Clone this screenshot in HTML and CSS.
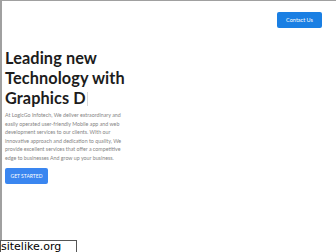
FILE: index.html
```html
<!DOCTYPE html>
<html>

<head lang="en">
    <meta charset="UTF-8">
    <title>LogicGo Infotech</title>
    <link rel="stylesheet" href="styles.css">
</head>

<body>
    <div class="frame">
        <div class="header">
            <a class="contact-btn" href="javascript:;">Contact Us</a>
        </div>
        <div class="hero">
            <h1 class="hero-title">Leading new<br>Technology with<br>Graphics D<span class="cursor"></span></h1>
            <p class="hero-text">At LogicGo Infotech, We deliver extraordinary and easily operated user-friendly Mobile app and web development services to our clients. With our innovative approach and dedication to quality, We provide excellent services that offer a competitive edge to businesses And grow up your business.</p>
            <a class="start-btn" href="javascript:;">GET STARTED</a>
        </div>
    </div>
    <div class="site-label">sitelike.org</div>
</body>

</html>
```

FILE: styles.css
```css
html,
body,
div,
p,
h1,
a {
    padding: 0px;
    margin: 0px;
}

body {
    width: 336px;
    height: 252px;
    overflow: hidden;
    background: #ffffff;
    font-family: "Lato", "Noto Sans", sans-serif;
    position: relative;
}

a {
    text-decoration: none;
}

.frame {
    height: 240px;
    border-top: 1px solid #a0a0a0;
    border-left: 2px solid #a0a0a0;
}

.header {
    display: flex;
    justify-content: flex-end;
    padding: 11px 14px 0px 0px;
}

.contact-btn {
    display: block;
    width: 45px;
    height: 16px;
    line-height: 16px;
    text-align: center;
    font-size: 5.5px;
    color: #ffffff;
    background: #1a7fe3;
    border-radius: 2px;
}

.hero {
    padding: 20px 0px 0px 3px;
}

.hero-title {
    font-size: 16.3px;
    line-height: 20px;
    font-weight: 700;
    color: #1c1c1c;
    letter-spacing: 0.1px;
}

.cursor {
    display: inline-block;
    width: 1px;
    height: 14px;
    margin-left: 1px;
    vertical-align: -2px;
    background: #d8d8d8;
}

.hero-text {
    width: 126px;
    margin-top: 3px;
    font-size: 5.3px;
    line-height: 8.6px;
    color: #858585;
}

.start-btn {
    display: block;
    width: 43px;
    height: 16px;
    line-height: 16px;
    margin-top: 5px;
    text-align: center;
    font-size: 5px;
    color: #ffffff;
    background: #3a86f0;
    border-radius: 2px;
}

.site-label {
    position: absolute;
    left: 0px;
    top: 240px;
    width: 75px;
    height: 11px;
    border: 1px solid #555555;
    background: #ffffff;
    font-family: "DejaVu Sans", sans-serif;
    font-size: 11px;
    line-height: 11px;
    color: #000000;
}
```
